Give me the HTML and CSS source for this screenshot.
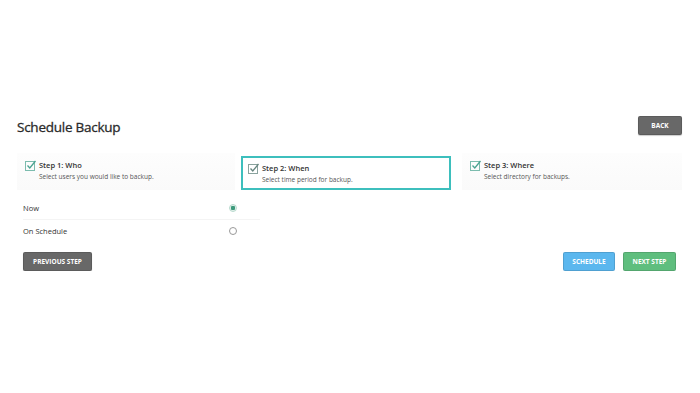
FILE: index.html
```html
<!DOCTYPE html>
<html lang="en">
<head>
  <meta charset="UTF-8">
  <title>Schedule Backup</title>
  <link rel="stylesheet" href="styles.css">
</head>
<body>
  <div class="page">
    <div class="page-head">
      <h1>Schedule Backup</h1>
      <button class="btn btn-dark btn-back">Back</button>
    </div>

    <div class="steps">
      <div class="step step-one">
        <span class="check">
          <svg width="11" height="11" viewBox="0 0 11 11"><rect x="0.5" y="1.5" width="9" height="9" fill="none" stroke="#7cbcae" stroke-width="1"/><path d="M2.5 5.5 L4.8 8 L10.5 1" fill="none" stroke="#4aa391" stroke-width="1.3"/></svg>
        </span>
        <div class="step-text">
          <div class="step-title">Step 1: Who</div>
          <div class="step-sub">Select users you would like to backup.</div>
        </div>
      </div>
      <div class="step active">
        <span class="check">
          <svg width="11" height="11" viewBox="0 0 11 11"><rect x="0.5" y="1.5" width="9" height="9" fill="none" stroke="#8aa39e" stroke-width="1"/><path d="M2.5 5.5 L4.8 8 L10.5 1" fill="none" stroke="#66857f" stroke-width="1.3"/></svg>
        </span>
        <div class="step-text">
          <div class="step-title">Step 2: When</div>
          <div class="step-sub">Select time period for backup.</div>
        </div>
      </div>
      <div class="step step-three">
        <span class="check">
          <svg width="11" height="11" viewBox="0 0 11 11"><rect x="0.5" y="1.5" width="9" height="9" fill="none" stroke="#7cbcae" stroke-width="1"/><path d="M2.5 5.5 L4.8 8 L10.5 1" fill="none" stroke="#4aa391" stroke-width="1.3"/></svg>
        </span>
        <div class="step-text">
          <div class="step-title">Step 3: Where</div>
          <div class="step-sub">Select directory for backups.</div>
        </div>
      </div>
    </div>

    <div class="options">
      <label class="option">
        <span>Now</span>
        <span class="radio checked"></span>
      </label>
      <label class="option">
        <span>On Schedule</span>
        <span class="radio"></span>
      </label>
    </div>

    <div class="actions">
      <button class="btn btn-dark">Previous Step</button>
      <div class="actions-right">
        <button class="btn btn-blue">Schedule</button>
        <button class="btn btn-green">Next Step</button>
      </div>
    </div>
  </div>
</body>
</html>
```

FILE: styles.css
```css
body {
  margin: 0;
  background: #fff;
  font-family: "Open Sans", "Noto Sans", sans-serif;
  color: #333;
}

.page {
  padding: 115px 18px 0 17px;
}

.page-head {
  display: flex;
  justify-content: space-between;
  align-items: center;
  height: 23px;
}

.page-head h1 {
  margin: 0;
  font-size: 13.5px;
  font-weight: 400;
  color: #2a2a2a;
  letter-spacing: -0.25px;
  -webkit-text-stroke: 0.3px #2a2a2a;
}

.btn {
  border: 1px solid rgba(0, 0, 0, 0.12);
  border-radius: 2px;
  font-family: "Open Sans", sans-serif;
  font-size: 6.5px;
  font-weight: 700;
  text-transform: uppercase;
  color: #fff;
  height: 19px;
  padding: 0 8px;
  cursor: pointer;
}

.btn-dark {
  background: #686868;
  box-shadow: 0 1px 1px rgba(0, 0, 0, 0.2);
}

.btn-back {
  width: 44px;
  margin-top: -3px;
}

.btn-blue {
  background: #5bb7ee;
  width: 52px;
}

.btn-green {
  background: #5fbe7e;
  width: 53px;
}

.steps {
  display: flex;
  margin-top: 15px;
}

.step {
  display: flex;
  align-items: flex-start;
  gap: 3px;
  padding: 7px 8px;
  height: 37px;
  box-sizing: border-box;
  background: linear-gradient(#fdfdfd, #fafafa);
}

.step-one {
  width: 218px;
}

.step-three {
  flex: 1;
  margin-left: 11px;
}

.step.active {
  width: 210px;
  margin-left: 6px;
  border: 2px solid #3dbfbd;
  background: #fff;
  padding: 5px 5px;
  margin-top: 3px;
  height: 34px;
}

.check {
  display: block;
  width: 11px;
  height: 11px;
}

.check svg {
  display: block;
}

.step-title {
  font-size: 7.5px;
  font-weight: 600;
  color: #333;
  line-height: 11px;
}

.step-sub {
  font-size: 6.5px;
  color: #555;
  line-height: 11px;
}

.options {
  width: 237px;
  margin: 7px 0 0 6px;
}

.option {
  display: flex;
  justify-content: space-between;
  align-items: center;
  height: 22px;
  padding-right: 23px;
  font-size: 7.5px;
  color: #333;
}

.option + .option {
  border-top: 1px solid #f4f4f4;
}

.radio {
  width: 8px;
  height: 8px;
  border: 1px solid #999;
  border-radius: 50%;
  box-sizing: border-box;
  background: #fff;
}

.radio.checked {
  border-color: #b7d9cd;
  background: radial-gradient(circle, #3e9a7c 0 2px, #e4f2ec 2.5px);
}

.actions {
  display: flex;
  justify-content: space-between;
  align-items: center;
  margin-top: 10px;
  padding: 0 6px;
}

.actions .btn-dark {
  width: 69px;
}

.actions-right {
  display: flex;
  gap: 8px;
}
```
